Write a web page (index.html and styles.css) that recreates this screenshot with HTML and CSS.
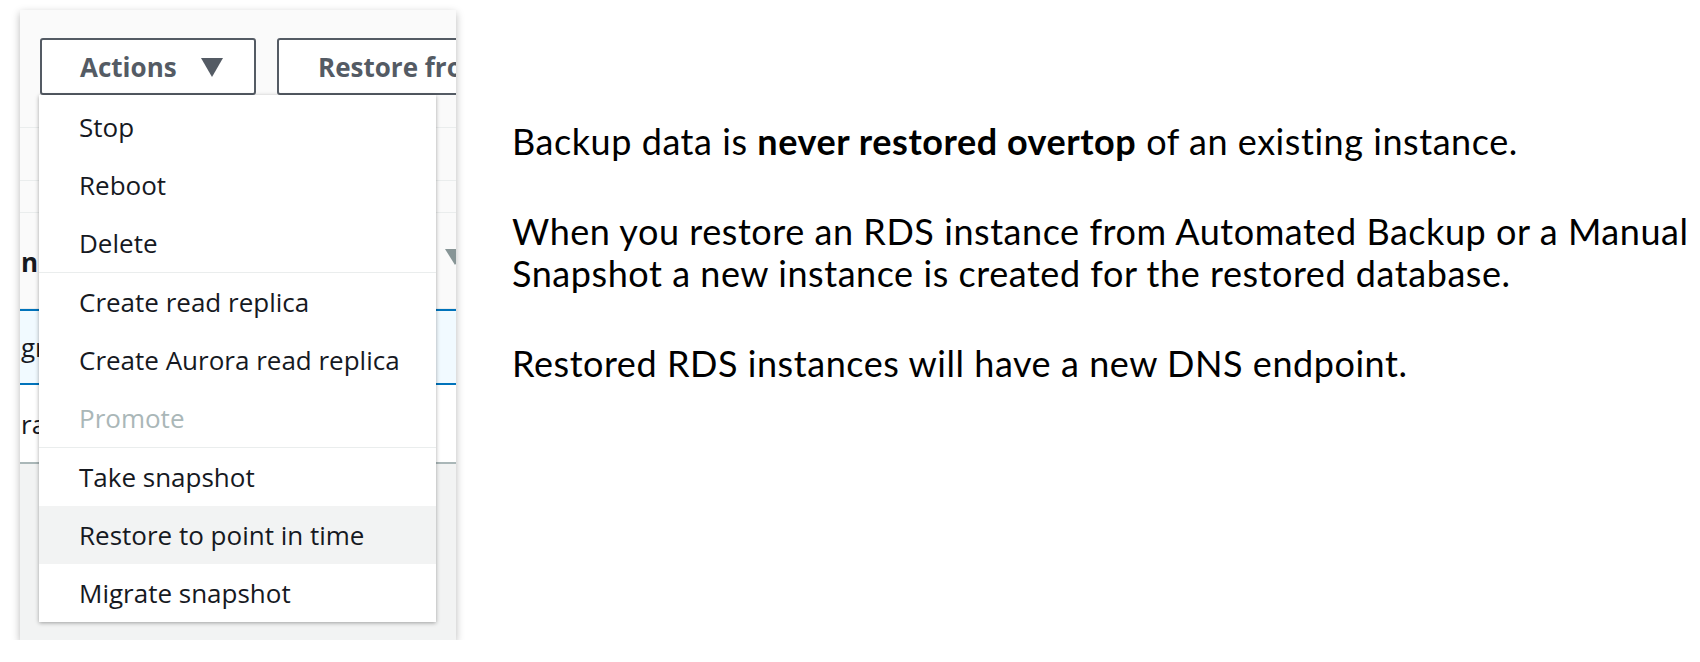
FILE: index.html
```html
<!DOCTYPE html>
<html>
<head>
<meta charset="utf-8">
<link rel="stylesheet" href="styles.css">
</head>
<body>
<div class="page">
  <div class="shot">
    <div class="toolbar">
      <div class="btn btn-actions"><span>Actions</span><svg class="caret" width="22" height="19" viewBox="0 0 22 19"><polygon points="0,0 22,0 11,19" fill="#545b64"/></svg></div>
      <div class="btn btn-restore"><span>Restore from S3</span></div>
    </div>
    <div class="table">
      <div class="row r1"></div>
      <div class="row r2"></div>
      <div class="row r3"></div>
      <div class="row head"><span class="cell bold">n</span><svg class="sort" width="20" height="16" viewBox="0 0 20 16"><polygon points="0,0 20,0 10,16" fill="#879596"/></svg></div>
      <div class="row selected"><span class="cell">gr</span></div>
      <div class="row last"><span class="cell">ra</span></div>
    </div>
    <div class="footer"></div>
    <div class="menu">
      <div class="group">
        <div class="item">Stop</div>
        <div class="item">Reboot</div>
        <div class="item">Delete</div>
      </div>
      <div class="group">
        <div class="item">Create read replica</div>
        <div class="item">Create Aurora read replica</div>
        <div class="item disabled">Promote</div>
      </div>
      <div class="group">
        <div class="item">Take snapshot</div>
        <div class="item hover">Restore to point in time</div>
        <div class="item">Migrate snapshot</div>
      </div>
    </div>
  </div>
  <div class="notes">
    <p>Backup data is <b>never restored overtop</b> of an existing instance.</p>
    <p>When you restore an RDS instance from Automated Backup or a Manual<br>Snapshot a new instance is created for the restored database.</p>
    <p>Restored RDS instances will have a new DNS endpoint.</p>
  </div>
</div>
</body>
</html>
```
FILE: styles.css
```css
html, body {
  margin: 0;
  padding: 0;
  background: #ffffff;
}
.page {
  display: flex;
  align-items: flex-start;
}
.shot {
  position: relative;
  margin: 10px 0 0 20px;
  width: 436px;
  height: 630px;
  overflow: hidden;
  background: #fafafa;
  box-shadow: 0 3px 8px rgba(0, 0, 0, 0.28);
  font-family: "Open Sans", "Liberation Sans", sans-serif;
}
.toolbar {
  display: flex;
  gap: 21px;
  padding: 28px 0 0 20px;
  height: 57px;
}
.btn {
  flex: none;
  box-sizing: border-box;
  height: 57px;
  border: 2px solid #545b64;
  border-radius: 3px;
  background: #ffffff;
  color: #545b64;
  font-weight: 700;
  font-size: 26px;
  display: flex;
  align-items: center;
}
.btn-actions {
  width: 216px;
  padding-left: 38px;
  gap: 24px;
}
.btn-restore {
  width: 260px;
  padding-left: 39px;
  white-space: nowrap;
}
.caret {
  margin-top: 1px;
}
.table {
  background: #ffffff;
}
.row {
  box-sizing: border-box;
  border-bottom: 1px solid #eaeded;
  display: flex;
  align-items: center;
  font-size: 26px;
  color: #16191f;
  white-space: nowrap;
}
.r1 { height: 33px; background: #fafafa; }
.r2 { height: 53px; background: #fafafa; }
.r3 { height: 32px; background: #fafafa; }
.head {
  height: 96px;
  background: #fafafa;
  justify-content: space-between;
  padding-top: 2px;
}
.sort {
  margin-right: -9px;
  margin-top: -10px;
}
.selected {
  height: 76px;
  background: #f1faff;
  border-top: 2px solid #0073bb;
  border-bottom: 2px solid #0073bb;
}
.last {
  height: 79px;
  border-bottom: 2px solid #aab7b8;
}
.cell {
  padding-left: 1px;
}
.bold {
  font-weight: 700;
  color: #16191f;
}
.footer {
  height: 177px;
  background: #f2f3f3;
}
.menu {
  position: absolute;
  left: 19px;
  top: 85px;
  width: 397px;
  padding-top: 3px;
  background: #ffffff;
  box-shadow: 0 1px 4px rgba(0, 0, 0, 0.35);
}
.group + .group {
  border-top: 1px solid #eaeded;
}
.item {
  height: 58px;
  padding-left: 40px;
  display: flex;
  align-items: center;
  font-size: 26px;
  color: #16191f;
  white-space: nowrap;
}
.item.disabled {
  color: #aab7b8;
}
.item.hover {
  background: #f2f3f3;
}
.notes {
  margin: 120px 0 0 56px;
  font-family: "Lato", "Liberation Sans", sans-serif;
  font-size: 36px;
  letter-spacing: 0.55px;
  line-height: 42px;
  color: #000000;
}
.notes p {
  margin: 0 0 48px 0;
  white-space: nowrap;
}
.notes b {
  font-weight: 700;
}
```
